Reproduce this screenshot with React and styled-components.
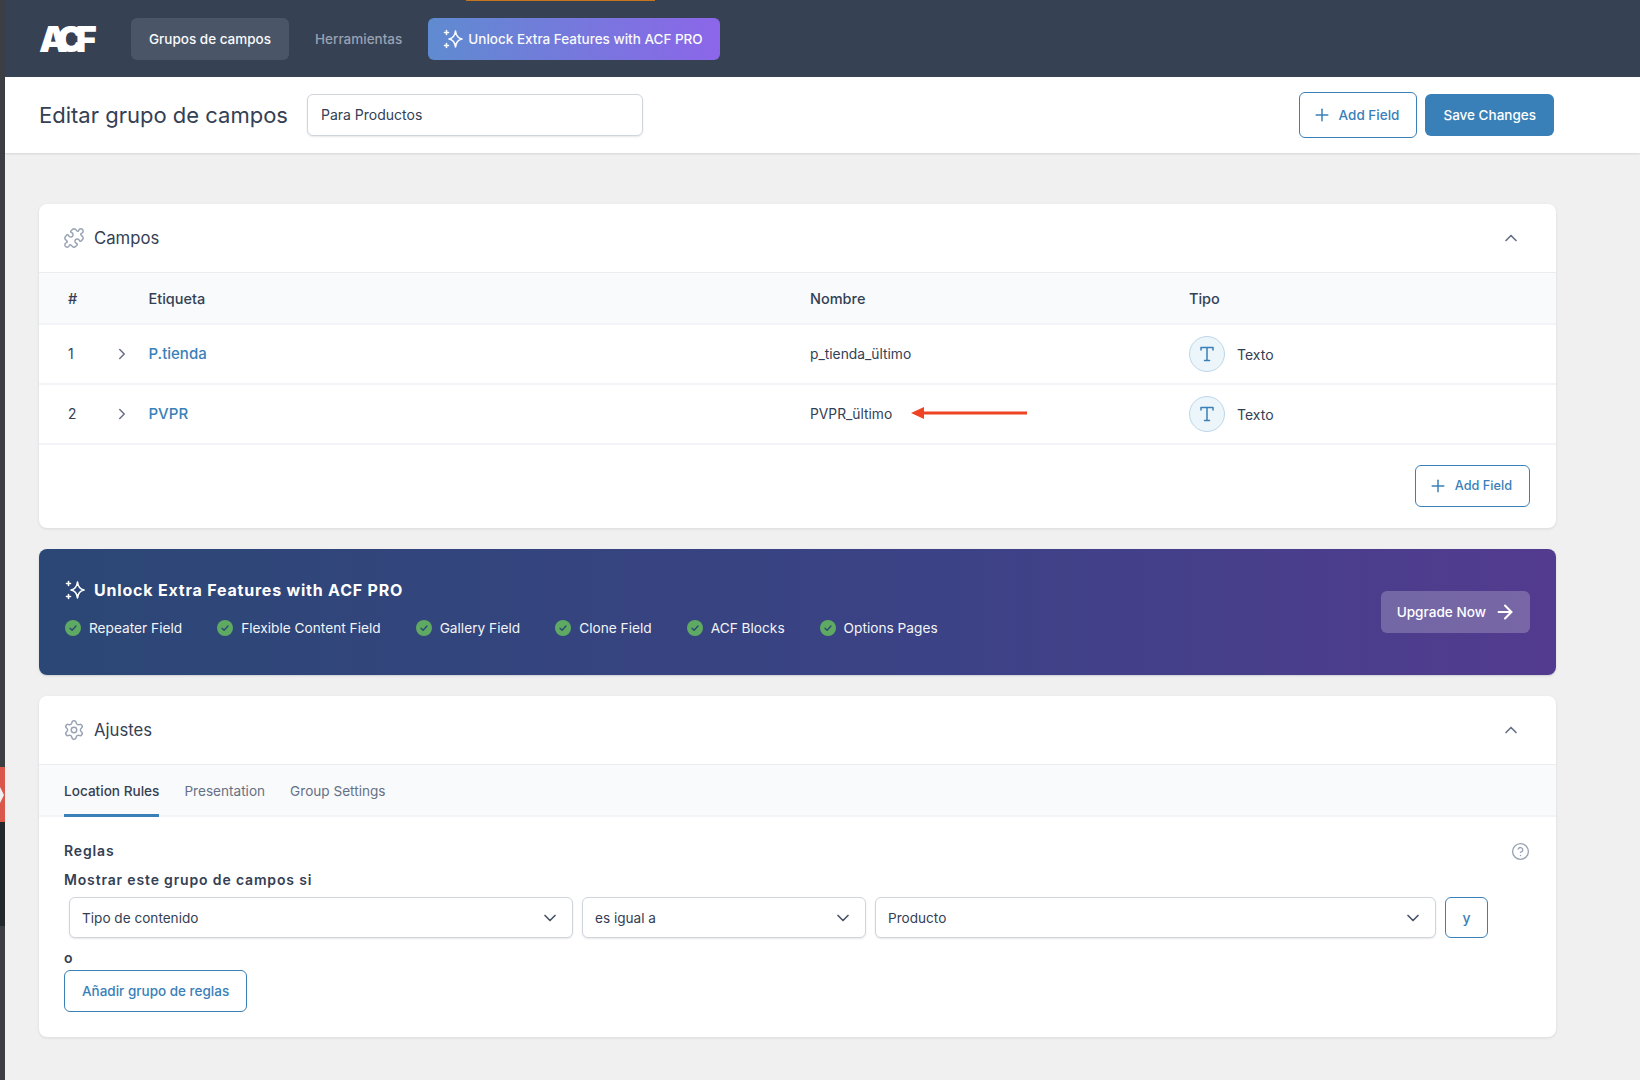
import React from "react";
import styled, { createGlobalStyle } from "styled-components";
import { ChevronDown, ChevronRight, ChevronUp, CircleHelp, Plus, Puzzle, Settings, ArrowRight } from "lucide-react";

const GlobalStyle = createGlobalStyle`
  html, body { margin: 0; padding: 0; background: #f0f0f1; }
  body { font-family: Inter, "Liberation Sans", sans-serif; color: #344054; font-size: 14px; }
  * { box-sizing: border-box; }
`;

const Page = styled.div`
  display: flex;
  height: 1080px;
  overflow: hidden;
`;

const AdminStrip = styled.div`
  display: flex;
  flex-direction: column;
  flex: 0 0 5px;
`;

const StripPiece = styled.div`
  height: ${(p) => (p.$height ? `${p.$height}px` : "auto")};
  flex: ${(p) => (p.$height ? "none" : "1")};
  background: ${(p) => p.$color};
  ${(p) => p.$notch && "clip-path: polygon(0 0, 100% 0, 100% 100%, 0 100%, 0 36px, 4px 28px, 0 20px);"}
`;

const Main = styled.div`
  flex: 1;
  min-width: 0;
`;

const TopBar = styled.div`
  position: relative;
  display: flex;
  align-items: center;
  height: 77px;
  padding-left: 34px;
  background: #364153;
  &::before {
    content: "";
    position: absolute;
    left: 461px;
    top: 0;
    width: 189px;
    height: 1px;
    background: #c7741f;
  }
`;

const Logo = styled.div`
  width: 92px;
  font-size: 36px;
  font-weight: 900;
  line-height: 1;
  letter-spacing: -8.5px;
  color: #fff;
`;

const Nav = styled.nav`
  display: flex;
  gap: 8px;
`;

const NavItem = styled.a`
  display: flex;
  align-items: center;
  gap: 5px;
  height: 42px;
  padding: ${(p) => (p.$pro ? "0 17px 0 15px" : "0 18px")};
  border-radius: 6px;
  font-size: 13.5px;
  font-weight: 500;
  color: ${(p) => (p.$active || p.$pro ? "#f9fafb" : "#98a2b3")};
  background: ${(p) =>
    p.$pro ? "linear-gradient(90deg, #5f8bd0, #8c66e9)" : p.$active ? "#4a5568" : "transparent"};
`;

const PageHeader = styled.div`
  display: flex;
  align-items: center;
  gap: 19px;
  height: 76px;
  padding: 0 86px 0 34px;
  background: #fff;
  box-shadow: 0 1px 2px rgba(16, 24, 40, 0.12);
`;

const Title = styled.h1`
  margin: 0;
  font-size: 22px;
  font-weight: 400;
  line-height: 1;
  color: #344054;
`;

const TitleInput = styled.div`
  display: flex;
  align-items: center;
  width: 336px;
  height: 42px;
  padding: 0 13px 1px;
  background: #fff;
  border: 1px solid #d0d5dd;
  border-radius: 6px;
  box-shadow: 0 1px 2px rgba(16, 24, 40, 0.1);
`;

const HeaderActions = styled.div`
  display: flex;
  align-items: center;
  gap: 8px;
  margin-left: auto;
`;

const OutlineButton = styled.a`
  display: flex;
  align-items: center;
  gap: 7px;
  height: ${(p) => (p.$tall ? "46px" : "42px")};
  padding: ${(p) => (p.$plain ? "0 17px 1px" : "0 17px 1px 12px")};
  background: #fff;
  border: 1px solid #3a80b8;
  border-radius: 6px;
  color: #3a80b8;
  font-weight: 500;
  font-size: ${(p) => (p.$small ? "12.7px" : "13.5px")};
`;

const SaveButton = styled.a`
  display: flex;
  align-items: center;
  height: 42px;
  padding: 0 18px 1px;
  background: #3a80b8;
  border-radius: 6px;
  color: #fff;
  font-size: 13.5px;
  font-weight: 500;
`;

const Content = styled.div`
  display: flex;
  flex-direction: column;
  gap: 21px;
  padding: 51px 84px 0 34px;
`;

const Card = styled.section`
  background: #fff;
  border-radius: 8px;
  box-shadow: 0 1px 3px rgba(16, 24, 40, 0.1);
  overflow: hidden;
`;

const CardHeader = styled.div`
  display: flex;
  align-items: center;
  gap: 9px;
  height: 69px;
  padding: 0 35px 0 24px;
  border-bottom: 1px solid #eaecf0;
  color: #98a2b3;
`;

const CardTitle = styled.h2`
  margin: 0;
  font-size: 16.7px;
  font-weight: 400;
  color: #344054;
`;

const Collapse = styled.span`
  display: flex;
  margin-left: auto;
  color: #667085;
`;

const FieldRow = styled.div`
  display: grid;
  grid-template-columns: 48px 32.5px 661.5px 379px 1fr;
  align-items: center;
  height: ${(p) => (p.$head ? "52px" : "60px")};
  padding-left: 29px;
  background: ${(p) => (p.$head ? "#f9fafb" : "#fff")};
  border-bottom: 2px solid #f2f4f7;
  font-weight: ${(p) => (p.$head ? 500 : 400)};
  font-size: ${(p) => (p.$head ? "14.5px" : "13.8px")};
`;

const RowCaret = styled.span`
  display: flex;
  margin-left: -3px;
  color: #667085;
`;

const FieldLink = styled.a`
  margin-bottom: 2px;
  font-size: 15px;
  font-weight: 500;
  color: #3a80b8;
`;

const NameCell = styled.span`
  display: flex;
  align-items: center;
  gap: 19px;
  svg {
    margin-top: -3px;
  }
`;

const TypeCell = styled.span`
  display: flex;
  align-items: center;
  gap: 12px;
  font-size: 14px;
`;

const TypeBadge = styled.span`
  display: flex;
  align-items: center;
  justify-content: center;
  width: 36px;
  height: 36px;
  border-radius: 50%;
  background: #ebf5fa;
  border: 1px solid #bcd6ea;
`;

const TableFooter = styled.div`
  display: flex;
  justify-content: flex-end;
  height: 83px;
  padding: 20px 26px 0 0;
`;

const Banner = styled.section`
  display: flex;
  align-items: center;
  justify-content: space-between;
  height: 126px;
  padding: 0 26px 8px 26px;
  border-radius: 8px;
  background: linear-gradient(90deg, #2b4775, #3c4286 60%, #533b8f);
  color: #fff;
  box-shadow: 0 1px 2px rgba(16, 24, 40, 0.15);
`;

const BannerTitle = styled.h2`
  display: flex;
  align-items: center;
  gap: 9px;
  margin: 0 0 15px;
  font-size: 16px;
  font-weight: 700;
  letter-spacing: 0.8px;
  line-height: 24px;
`;

const FeatureList = styled.ul`
  display: flex;
  gap: 35px;
  margin: 0;
  padding: 0;
  list-style: none;
`;

const Feature = styled.li`
  display: flex;
  align-items: center;
  gap: 8px;
  font-size: 13.7px;
  color: #f2f4f7;
  line-height: 22px;
`;

const UpgradeButton = styled.a`
  display: flex;
  align-items: center;
  gap: 8px;
  height: 42px;
  margin-bottom: -8px;
  padding: 0 14px 1px 16px;
  background: rgba(255, 255, 255, 0.22);
  border-radius: 6px;
  font-size: 13.6px;
  font-weight: 500;
  color: #fff;
`;

const Tabs = styled.div`
  display: flex;
  gap: 25px;
  height: 52px;
  padding-left: 25px;
  background: #f9fafb;
  border-bottom: 2px solid #f2f4f7;
`;

const Tab = styled.a`
  display: flex;
  align-items: center;
  height: 52px;
  padding-top: 2px;
  font-size: 13.6px;
  font-weight: ${(p) => (p.$active ? 500 : 400)};
  color: ${(p) => (p.$active ? "#344054" : "#667085")};
  border-bottom: ${(p) => (p.$active ? "3px solid #3a80b8" : "3px solid transparent")};
`;

const RulesBody = styled.div`
  padding: 24px 26px 25px 25px;
`;

const RulesTop = styled.div`
  display: flex;
  align-items: center;
  justify-content: space-between;
  color: #98a2b3;
`;

const RuleLabel = styled.div`
  margin-top: ${(p) => p.$top || 0}px;
  font-weight: 600;
  line-height: 20px;
  letter-spacing: 0.84px;
  color: #344054;
`;

const RuleRow = styled.div`
  display: grid;
  grid-template-columns: 504px 284px 561px 43px;
  gap: 9px;
  margin-top: 7px;
  padding-left: 5px;
`;

const SelectBox = styled.div`
  display: flex;
  align-items: center;
  justify-content: space-between;
  height: 41px;
  padding: 0 12px;
  background: #fff;
  border: 1px solid #d0d5dd;
  border-radius: 6px;
  box-shadow: 0 1px 2px rgba(16, 24, 40, 0.1);
  font-size: 13.6px;
  color: #344054;
  svg {
    color: #475467;
  }
`;

const AndButton = styled.a`
  display: flex;
  align-items: center;
  justify-content: center;
  height: 41px;
  border: 1px solid #3a80b8;
  border-radius: 6px;
  color: #3a80b8;
  font-weight: 500;
`;

const AddGroupWrap = styled.div`
  display: flex;
  margin-top: 2px;
`;

const Sparkles = ({ size = 20 }) => (
  <svg width={size} height={size} viewBox="0 0 20 20" fill="none" stroke="currentColor" strokeWidth="1.6" strokeLinejoin="round" strokeLinecap="round">
    <path d="M12.500 2c.6 5 2.400 7.200 6.500 8-4.100.8-5.900 3-6.500 8-.6-5-2.400-7.200-6.500-8 4.100-.8 5.900-3 6.500-8Z" />
    <path d="M3.500 1.500v4M1.500 3.500h4M3.500 14.500v4M1.500 16.500h4" />
  </svg>
);

const CheckDot = () => (
  <svg width="16" height="16" viewBox="0 0 16 16">
    <circle cx="8" cy="8" r="8" fill="#5faa62" />
    <path d="M5 8.200l2.100 2.100L11 6" fill="none" stroke="#2b4775" strokeWidth="1.300" strokeLinecap="round" strokeLinejoin="round" />
  </svg>
);

const SerifT = () => (
  <svg width="18" height="18" viewBox="0 0 18 18" fill="none" stroke="#3a80b8" strokeWidth="1.500" strokeLinecap="round" strokeLinejoin="round">
    <path d="M3 5V2.500h12V5M9 2.500v13M6.500 15.500h5" />
  </svg>
);

const RedArrow = () => (
  <svg width="116" height="14" viewBox="0 0 116 14">
    <path d="M0 7 13 1v4.500h103v3H13V13Z" fill="#ee4423" />
  </svg>
);

const fields = [
  { id: 1, label: "P.tienda", name: "p_tienda_ültimo" },
  { id: 2, label: "PVPR", name: "PVPR_ültimo", marked: true },
];

const features = ["Repeater Field", "Flexible Content Field", "Gallery Field", "Clone Field", "ACF Blocks", "Options Pages"];

const App = () => {
  return (
    <Page>
      <GlobalStyle />
      <AdminStrip>
        <StripPiece $height={767} $color="#3b3f44" />
        <StripPiece $height={55} $color="#d9584a" $notch />
        <StripPiece $height={104} $color="#23282d" />
        <StripPiece $color="#3b3f44" />
      </AdminStrip>
      <Main>
        <TopBar>
          <Logo>ACF</Logo>
          <Nav>
            <NavItem $active>Grupos de campos</NavItem>
            <NavItem>Herramientas</NavItem>
            <NavItem $pro>
              <Sparkles />
              Unlock Extra Features with ACF PRO
            </NavItem>
          </Nav>
        </TopBar>
        <PageHeader>
          <Title>Editar grupo de campos</Title>
          <TitleInput>Para Productos</TitleInput>
          <HeaderActions>
            <OutlineButton $tall>
              <Plus size={20} strokeWidth={1.8} />
              Add Field
            </OutlineButton>
            <SaveButton>Save Changes</SaveButton>
          </HeaderActions>
        </PageHeader>
        <Content>
          <Card>
            <CardHeader>
              <Puzzle size={22} strokeWidth={1.6} />
              <CardTitle>Campos</CardTitle>
              <Collapse>
                <ChevronUp size={20} />
              </Collapse>
            </CardHeader>
            <FieldRow $head>
              <span>#</span>
              <span />
              <span>Etiqueta</span>
              <span>Nombre</span>
              <span>Tipo</span>
            </FieldRow>
            {fields.map((item) => (
              <FieldRow key={item.id}>
                <span>{item.id}</span>
                <RowCaret>
                  <ChevronRight size={18} />
                </RowCaret>
                <FieldLink>{item.label}</FieldLink>
                <NameCell>
                  {item.name}
                  {item.marked && <RedArrow />}
                </NameCell>
                <TypeCell>
                  <TypeBadge>
                    <SerifT />
                  </TypeBadge>
                  Texto
                </TypeCell>
              </FieldRow>
            ))}
            <TableFooter>
              <OutlineButton $small>
                <Plus size={20} strokeWidth={1.8} />
                Add Field
              </OutlineButton>
            </TableFooter>
          </Card>

          <Banner>
            <div>
              <BannerTitle>
                <Sparkles />
                Unlock Extra Features with ACF PRO
              </BannerTitle>
              <FeatureList>
                {features.map((name) => (
                  <Feature key={name}>
                    <CheckDot />
                    {name}
                  </Feature>
                ))}
              </FeatureList>
            </div>
            <UpgradeButton>
              Upgrade Now
              <ArrowRight size={22} strokeWidth={2.2} />
            </UpgradeButton>
          </Banner>

          <Card>
            <CardHeader>
              <Settings size={22} strokeWidth={1.6} />
              <CardTitle>Ajustes</CardTitle>
              <Collapse>
                <ChevronUp size={20} />
              </Collapse>
            </CardHeader>
            <Tabs>
              <Tab $active>Location Rules</Tab>
              <Tab>Presentation</Tab>
              <Tab>Group Settings</Tab>
            </Tabs>
            <RulesBody>
              <RulesTop>
                <RuleLabel>Reglas</RuleLabel>
                <CircleHelp size={19} strokeWidth={1.7} />
              </RulesTop>
              <RuleLabel $top={9}>Mostrar este grupo de campos si</RuleLabel>
              <RuleRow>
                <SelectBox>
                  Tipo de contenido
                  <ChevronDown size={20} />
                </SelectBox>
                <SelectBox>
                  es igual a
                  <ChevronDown size={20} />
                </SelectBox>
                <SelectBox>
                  Producto
                  <ChevronDown size={20} />
                </SelectBox>
                <AndButton>y</AndButton>
              </RuleRow>
              <RuleLabel $top={10}>o</RuleLabel>
              <AddGroupWrap>
                <OutlineButton $plain>Añadir grupo de reglas</OutlineButton>
              </AddGroupWrap>
            </RulesBody>
          </Card>
        </Content>
      </Main>
    </Page>
  );
};

export default App;
